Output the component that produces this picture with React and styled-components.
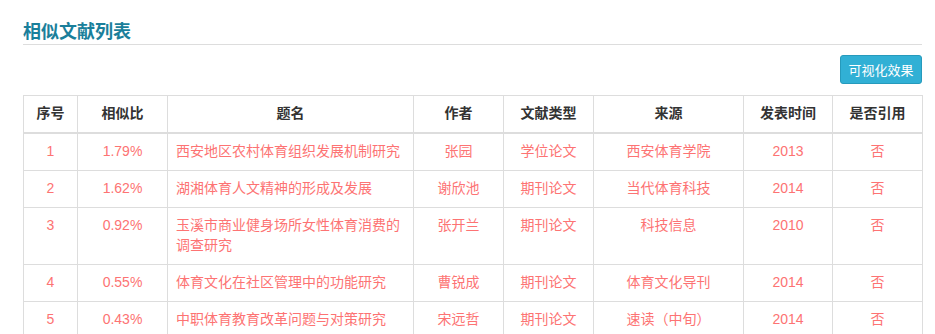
import React from "react";
import styled, { createGlobalStyle } from "styled-components";

const GlobalStyle = createGlobalStyle`
  html, body {
    margin: 0;
    padding: 0;
    background: #fff;
  }
  body {
    font-family: "Liberation Sans", "Noto Sans CJK SC", sans-serif;
    font-size: 14px;
    line-height: 1.42857;
    color: #333;
  }
`;

const Page = styled.div`
  padding: 19px 13px 0 23px;
`;

const Title = styled.h3`
  margin: 0;
  padding: 0 0 2px;
  font-family: "Noto Sans CJK SC", sans-serif;
  font-size: 18px;
  font-weight: 700;
  line-height: 23px;
  color: #1a7f9b;
  border-bottom: 1px solid #ddd;
`;

const Toolbar = styled.div`
  display: flex;
  justify-content: flex-end;
  padding: 10px 0 11px;
`;

const Button = styled.button`
  width: 82px;
  height: 29px;
  padding: 0;
  border: 1px solid #269abc;
  border-radius: 3px;
  background: #31b0d5;
  color: #fff;
  font-family: "Noto Sans CJK SC", sans-serif;
  font-size: 13px;
  cursor: pointer;
`;

const Table = styled.table`
  width: 100%;
  border-collapse: collapse;
  table-layout: fixed;
  border: 1px solid #ddd;
`;

const Th = styled.th`
  padding: 8px;
  border: 1px solid #ddd;
  border-bottom-width: 2px;
  font-weight: 700;
  color: #333;
  text-align: center;
  vertical-align: bottom;
`;

const Td = styled.td`
  padding: 8px;
  border: 1px solid #ddd;
  color: #fd7373;
  text-align: ${(p) => (p.$left ? "left" : "center")};
  vertical-align: top;
`;

const columns = [
  { name: "序号", width: 54 },
  { name: "相似比", width: 90 },
  { name: "题名", width: 246 },
  { name: "作者", width: 90 },
  { name: "文献类型", width: 90 },
  { name: "来源", width: 150 },
  { name: "发表时间", width: 89 },
  { name: "是否引用", width: 90 },
];

const rows = [
  ["1", "1.79%", "西安地区农村体育组织发展机制研究", "张园", "学位论文", "西安体育学院", "2013", "否"],
  ["2", "1.62%", "湖湘体育人文精神的形成及发展", "谢欣池", "期刊论文", "当代体育科技", "2014", "否"],
  ["3", "0.92%", "玉溪市商业健身场所女性体育消费的调查研究", "张开兰", "期刊论文", "科技信息", "2010", "否"],
  ["4", "0.55%", "体育文化在社区管理中的功能研究", "曹锐成", "期刊论文", "体育文化导刊", "2014", "否"],
  ["5", "0.43%", "中职体育教育改革问题与对策研究", "宋远哲", "期刊论文", "速读（中旬）", "2014", "否"],
];

export default function App() {
  return (
    <React.Fragment>
      <GlobalStyle />
      <Page>
        <Title>相似文献列表</Title>
        <Toolbar>
          <Button>可视化效果</Button>
        </Toolbar>
        <Table>
          <colgroup>
            {columns.map((c) => (
              <col key={c.name} style={{ width: c.width }} />
            ))}
          </colgroup>
          <thead>
            <tr>
              {columns.map((c) => (
                <Th key={c.name}>{c.name}</Th>
              ))}
            </tr>
          </thead>
          <tbody>
            {rows.map((r) => (
              <tr key={r[0]}>
                {r.map((cell, i) => (
                  <Td key={i} $left={i === 2}>
                    {cell}
                  </Td>
                ))}
              </tr>
            ))}
          </tbody>
        </Table>
      </Page>
    </React.Fragment>
  );
}
